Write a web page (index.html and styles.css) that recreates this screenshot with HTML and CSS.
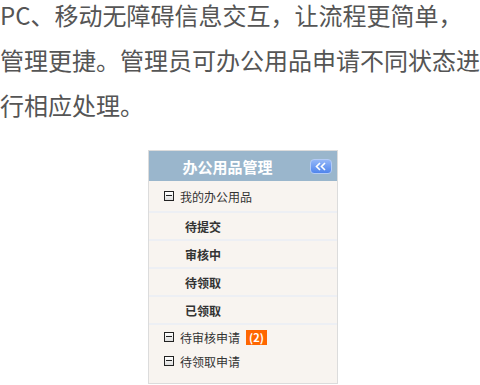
FILE: index.html
```html
<!DOCTYPE html>
<html lang="zh-CN">
<head>
<meta charset="utf-8">
<link rel="stylesheet" href="styles.css">
</head>
<body>
<div class="intro">
  <span class="line">PC、移动无障碍信息交互，让流程更简单，</span>
  <span class="line">管理更捷。管理员可办公用品申请不同状态进</span>
  <span class="line">行相应处理。</span>
</div>
<div class="panel">
  <div class="panel-head">
    <span class="panel-title">办公用品管理</span>
    <span class="collapse-btn"><svg width="12" height="9" viewBox="0 0 12 9"><path d="M5 1 L1.5 4.5 L5 8 M10 1 L6.5 4.5 L10 8" fill="none" stroke="#fff" stroke-width="1.6"/></svg></span>
  </div>
  <div class="group">
    <div class="group-row first"><span class="minus"></span>我的办公用品</div>
    <div class="sub-row">待提交</div>
    <div class="sub-row">审核中</div>
    <div class="sub-row">待领取</div>
    <div class="sub-row">已领取</div>
  </div>
  <div class="group-row"><span class="minus"></span>待审核申请<span class="badge">(2)</span></div>
  <div class="group-row"><span class="minus"></span>待领取申请</div>
</div>
</body>
</html>
```
FILE: styles.css
```css
html, body {
  margin: 0;
  padding: 0;
  background: #fff;
}
body {
  width: 480px;
}
.intro {
  font-family: "Noto Sans CJK SC", "Noto Sans", sans-serif;
  font-size: 24px;
  color: #555;
  display: flex;
  flex-direction: column;
  gap: 16px;
}
.line {
  display: block;
  line-height: 29px;
  height: 29px;
  white-space: nowrap;
}
.panel {
  margin: 31px 0 0 148px;
  width: 188px;
  border: 1px solid #dcdcdc;
  background: #f8f4f0;
  font-family: "Noto Sans CJK SC", sans-serif;
  padding-bottom: 10px;
}
.panel-head {
  height: 30px;
  background: #9ab6cc;
  display: flex;
  align-items: center;
}
.panel-title {
  flex: 1;
  text-align: center;
  color: #fff;
  font-weight: bold;
  font-size: 15px;
  padding-right: 4px;
}
.collapse-btn {
  box-sizing: border-box;
  width: 22px;
  height: 15px;
  margin-right: 5px;
  border: 1px solid #b3cbf6;
  border-radius: 4px;
  background: linear-gradient(#93b6f8, #5085ec);
  display: flex;
  align-items: center;
  justify-content: center;
}
.group-row {
  height: 24px;
  display: flex;
  align-items: center;
  padding-left: 15px;
  font-size: 12px;
  color: #333;
}
.group-row.first {
  height: 30px;
}
.minus {
  box-sizing: border-box;
  width: 10px;
  height: 10px;
  border: 1px solid #222;
  background: linear-gradient(#fff, #ddd);
  margin-right: 6px;
  position: relative;
}
.minus::after {
  content: "";
  position: absolute;
  left: 1px;
  right: 1px;
  top: 3px;
  height: 1px;
  background: #222;
}
.sub-row {
  height: 26px;
  border-top: 2px solid #edeff4;
  display: flex;
  align-items: center;
  padding-left: 36px;
  font-size: 12px;
  font-weight: bold;
  color: #333;
}
.sub-row:last-child {
  border-bottom: 2px solid #edeff4;
}
.badge {
  margin-left: 6px;
  background: #ff6600;
  color: #fff;
  font-weight: bold;
  font-size: 11px;
  padding: 0 3px;
  height: 15px;
  line-height: 15px;
}
```
